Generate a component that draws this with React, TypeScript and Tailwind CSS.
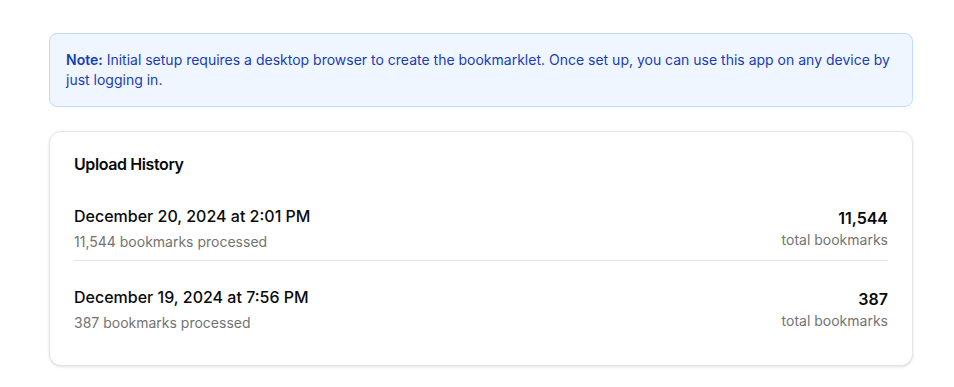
import React from "react";

const rows = [
  { date: "December 20, 2024 at 2:01 PM", count: "11,544" },
  { date: "December 19, 2024 at 7:56 PM", count: "387" },
];

export default function App() {
  return (
    <div
      className="min-h-[387px] bg-white pl-[49px] pr-[41px] pt-[33px] text-neutral-950"
      style={{ fontFamily: "Inter, 'Noto Sans', sans-serif" }}
    >
      <div className="rounded-lg border border-blue-200 bg-blue-50 p-4 text-sm leading-5 text-blue-800">
        <span className="font-semibold">Note:</span> Initial setup requires a desktop browser to create the
        bookmarklet. Once set up, you can use this app on any device by just logging in.
      </div>

      <div className="mt-6 rounded-xl border border-neutral-200 bg-white shadow-sm">
        <div className="p-6">
          <h3 className="text-base font-semibold leading-none tracking-tight">Upload History</h3>
        </div>
        <div className="px-6 pb-6">
          <div className="space-y-4">
            {rows.map((r, i) => (
              <div
                key={i}
                className={`flex items-center justify-between py-2 ${
                  i < rows.length - 1 ? "border-b border-neutral-200" : ""
                }`}
              >
                <div>
                  <p className="text-base font-medium leading-6">{r.date}</p>
                  <p className="mt-1 text-sm leading-5 text-neutral-500">{r.count} bookmarks processed</p>
                </div>
                <div className="text-right">
                  <p className="text-base font-semibold leading-6">{r.count}</p>
                  <p className="text-sm leading-5 text-neutral-500">total bookmarks</p>
                </div>
              </div>
            ))}
          </div>
        </div>
      </div>
    </div>
  );
}
